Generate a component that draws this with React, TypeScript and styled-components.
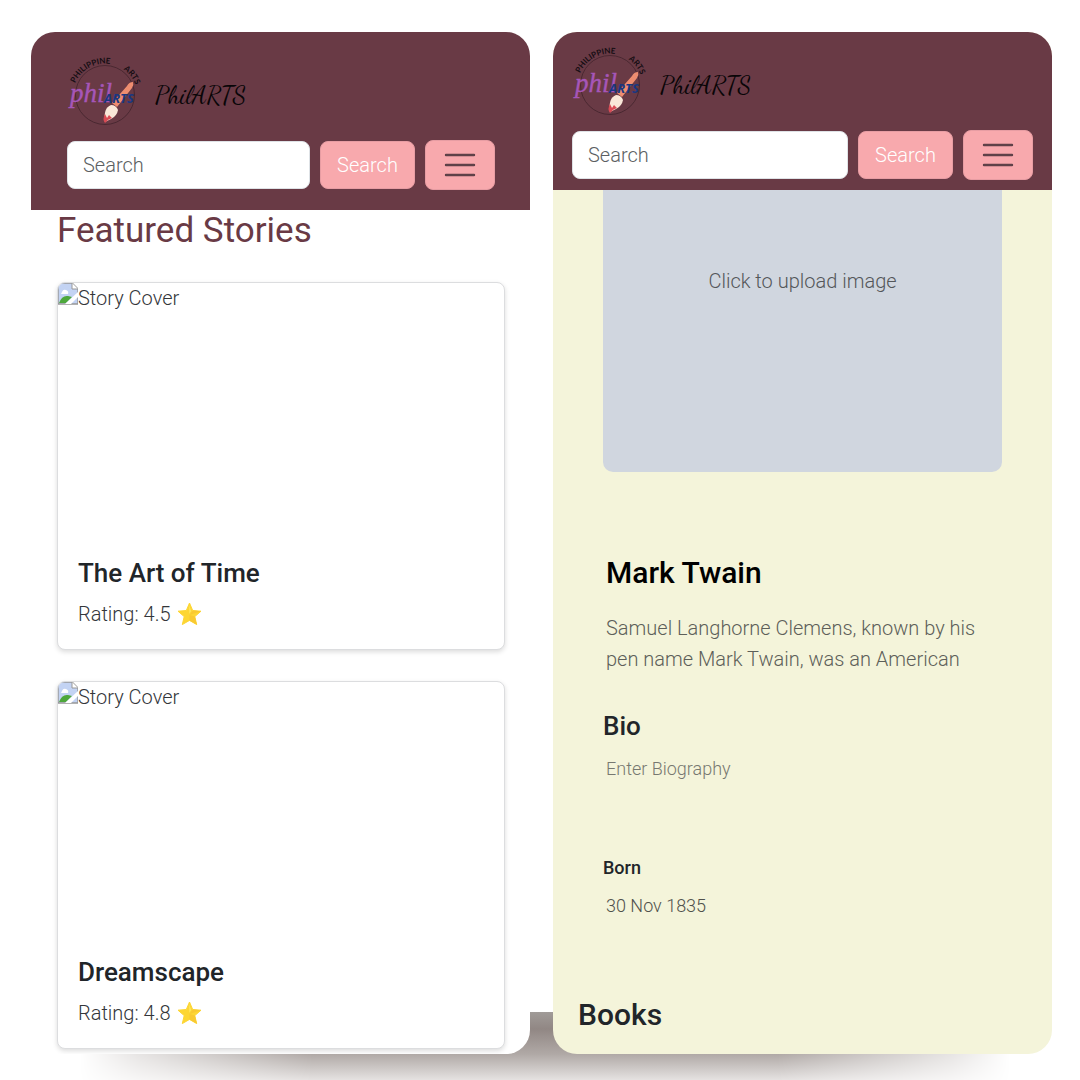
import React, { useId } from "react";
import styled, { createGlobalStyle } from "styled-components";

const GlobalStyle = createGlobalStyle`
  *, *::before, *::after { box-sizing: border-box; }
  body {
    margin: 0;
    background: #fff;
    color: #212529;
    font-family: Roboto, "Liberation Sans", sans-serif;
    font-weight: 300;
    font-size: 20px;
    line-height: 30px;
  }
  h1, h2, h3, p { margin: 0; }
  button, input, textarea { font: inherit; color: inherit; }
`;

const Stage = styled.main`
  position: relative;
  display: grid;
  grid-template-columns: 1fr 1fr;
  gap: 23px;
  min-height: 100vh;
  padding: 32px 28px 26px 31px;
  overflow: hidden;
`;

const GroundShadow = styled.div`
  position: absolute;
  left: 60px;
  right: 50px;
  bottom: 0;
  height: 68px;
  background: linear-gradient(#a09b98 0%, #918784 25%, #b0a9a6 62%, #e5e2e1 100%);
  mask-image: linear-gradient(90deg, transparent 2%, rgba(0, 0, 0, 0.3) 8%, #000 26%, #000 74%, rgba(0, 0, 0, 0.3) 92%, transparent 98%);
`;

const Screen = styled.section<{ $tone: string }>`
  position: relative;
  display: flex;
  flex-direction: column;
  min-width: 0;
  overflow: hidden;
  border-radius: 24px;
  background: ${(p) => p.$tone};
`;

const Header = styled.header<{ $inset: string }>`
  padding: ${(p) => p.$inset};
  background: #693a45;
`;

const Brand = styled.a`
  display: flex;
  align-items: flex-start;
  gap: 12px;
  height: 88px;
  color: #080507;
  text-decoration: none;
`;

const BrandName = styled.span`
  padding-top: 28px;
  font-family: "Dancing Script", cursive;
  font-weight: 400;
  font-size: 25px;
`;

const SearchRow = styled.form`
  display: flex;
  align-items: center;
  gap: 10px;
`;

const SearchInput = styled.input`
  flex: 1;
  min-width: 0;
  height: 48px;
  padding: 0 15px;
  border: 1px solid #dee2e6;
  border-radius: 8px;
  background: #fff;
  &::placeholder { color: #5c5f62; opacity: 1; }
`;

const SearchButton = styled.button`
  width: 95px;
  height: 48px;
  padding: 0;
  border: 1px solid #e79da3;
  border-radius: 8px;
  background: #f8a9ad;
  color: #fff;
`;

const MenuButton = styled.button`
  display: grid;
  place-items: center;
  width: 70px;
  height: 50px;
  padding: 0;
  border: 1px solid #e79da3;
  border-radius: 8px;
  background: #f8a9ad;
  color: #5f4148;
`;

const Stories = styled.div`
  display: flex;
  flex-direction: column;
  gap: 31px;
  padding: 0 25px 4px 26px;
`;

const StoriesTitle = styled.h1`
  color: #693a45;
  font-weight: 400;
  font-size: 35px;
  line-height: 41px;
`;

const Card = styled.article`
  border: 1px solid #dcdddf;
  border-radius: 8px;
  background: #fff;
  box-shadow: 0 2px 5px rgba(0, 0, 0, 0.14);
  overflow: hidden;
`;

const Cover = styled.div`
  display: flex;
  height: 268px;
  color: #33363a;
`;

const CardBody = styled.div`
  padding: 4px 20px 20px;
`;

const CardTitle = styled.h2`
  font-weight: 500;
  font-size: 26px;
  line-height: 36px;
`;

const Rating = styled.p`
  display: flex;
  align-items: center;
  gap: 6px;
  padding-top: 8px;
  color: #33363a;
`;

const Profile = styled.form`
  display: flex;
  flex-direction: column;
  padding: 0 50px;
`;

const Upload = styled.button`
  height: 282px;
  padding: 0 0 100px;
  border: 0;
  border-radius: 0 0 10px 10px;
  background: #d0d6df;
  color: #54575a;
`;

const Field = styled.input<{ $kind?: "name" | "small" }>`
  width: 100%;
  height: 40px;
  padding: 0 3px;
  border: 0;
  background: transparent;
  color: ${(p) => (p.$kind === "name" ? "#000" : "#50514c")};
  font-size: ${(p) => (p.$kind === "name" ? "30px" : "18px")};
  font-weight: ${(p) => (p.$kind === "name" ? 500 : 300)};
`;

const TextArea = styled.textarea<{ $small?: boolean }>`
  display: block;
  width: 100%;
  height: ${(p) => (p.$small ? "82px" : "62px")};
  padding: 0 3px;
  border: 0;
  resize: none;
  overflow: hidden;
  background: transparent;
  color: #5d5f59;
  font-size: ${(p) => (p.$small ? "18px" : "20px")};
  line-height: 31px;
  &::placeholder { color: #777870; opacity: 1; }
`;

const NameGroup = styled.div`
  padding: 80px 0 35px;
  display: grid;
  gap: 21px;
`;

const Label = styled.label<{ $large?: boolean }>`
  font-weight: 500;
  font-size: ${(p) => (p.$large ? "26px" : "18px")};
  line-height: ${(p) => (p.$large ? "32px" : "24px")};
`;

const FieldGroup = styled.div<{ $gap: string }>`
  display: grid;
  gap: ${(p) => p.$gap};
  padding-bottom: 21px;
`;

const BooksTitle = styled.h2`
  padding: 51px 25px 20px;
  font-weight: 500;
  font-size: 30px;
  line-height: 36px;
`;

function Logo() {
  const arc = useId();
  return (
    <svg width="76" height="82" viewBox="0 0 76 82" aria-hidden="true">
      <circle cx="38" cy="43" r="29.5" fill="none" stroke="#46262f" strokeWidth="0.9" />
      <path id={arc} d="M5.5 44A32.5 32.5 0 0 1 70.5 44" fill="none" />
      <text fill="#150d13" fontFamily="Lato, sans-serif" fontWeight="700" fontSize="8" textAnchor="middle">
        <textPath href={`#${arc}`} startOffset="34%">PHILIPPINE</textPath>
      </text>
      <text fill="#150d13" fontFamily="Lato, sans-serif" fontWeight="700" fontSize="8" textAnchor="middle">
        <textPath href={`#${arc}`} startOffset="79%">ARTS</textPath>
      </text>
      <path d="M66 30Q62 30 60 34L45 51L50 55L65 36Q67 33 66 30Z" fill="#ee8d70" />
      <path d="M44 53Q49 53 51 58Q50 64 44 67L38 70Q36 56 44 53Z" fill="#fae8d9" />
      <path d="M38 62L40 66L42 63L45 66Q41 67 38 71Q35 67 38 62Z" fill="#d94b55" />
      <text x="3" y="50" fill="#a656b8" stroke="#a656b8" strokeWidth="0.4" fontFamily="Liberation Serif, serif" fontStyle="italic" fontSize="27">phil</text>
      <text x="37" y="51" fill="#193781" fontFamily="Open Sans, sans-serif" fontStyle="italic" fontWeight="700" fontSize="13">ARTS</text>
    </svg>
  );
}

function TopBar({ inset, id }: { inset: string; id: string }) {
  return (
    <Header $inset={inset}>
      <Brand href="#home">
        <Logo />
        <BrandName>PhilARTS</BrandName>
      </Brand>
      <SearchRow onSubmit={(e) => e.preventDefault()}>
        <SearchInput id={id} type="search" aria-label="Search" placeholder="Search" />
        <SearchButton type="submit">Search</SearchButton>
        <MenuButton type="button" aria-label="Menu">
          <svg width="32" height="24" viewBox="0 0 32 24" fill="none" stroke="currentColor" strokeWidth="2.4" strokeLinecap="round">
            <path d="M2 2H30M2 12H30M2 22H30" />
          </svg>
        </MenuButton>
      </SearchRow>
    </Header>
  );
}

function MissingPicture() {
  return (
    <svg width="20" height="22" viewBox="0 0 20 22" aria-hidden="true">
      <path d="M0 0H14L20 6V21H0Z" fill="#c3d3f3" stroke="#989898" strokeWidth="1.4" />
      <path d="M4 9Q5 6 8 7Q11 8 10 11H3Z" fill="#fff" />
      <path d="M1 20Q4 12 10 13L14 14L8 20Z" fill="#4da83b" />
      <path d="M20 9L7 21H13L20 14Z" fill="#fff" />
      <path d="M14 0V6H20" fill="#fff" stroke="#989898" />
    </svg>
  );
}

function Star() {
  return (
    <svg width="25" height="24" viewBox="0 0 25 24" role="img" aria-label="stars">
      <path d="M12.5 1L15.7 8.5L24 9.2L17.8 14.6L19.7 22.6L12.5 18.4L5.3 22.6L7.2 14.6L1 9.2L9.3 8.5Z" fill="#fdd634" stroke="#fdd634" strokeLinejoin="round" />
      <path d="M12.5 13L17.8 14.6L19.7 22.6L12.5 18.4ZM12.5 13L15.7 8.5L24 9.2Z" fill="#f9c932" />
      <path d="M12.5 3L13.7 9L12.5 12Z" fill="#fff07a" />
    </svg>
  );
}

const stories = [
  { title: "The Art of Time", rating: "4.5" },
  { title: "Dreamscape", rating: "4.8" },
];

export default function App() {
  return (
    <>
      <GlobalStyle />
      <Stage>
        <GroundShadow />
        <Screen $tone="#fff">
          <TopBar inset="20px 35px 20px 36px" id="search-stories" />
          <Stories>
            <StoriesTitle>Featured Stories</StoriesTitle>
            {stories.map((s) => (
              <Card key={s.title}>
                <Cover>
                  <MissingPicture />
                  <span>Story Cover</span>
                </Cover>
                <CardBody>
                  <CardTitle>{s.title}</CardTitle>
                  <Rating>
                    Rating: {s.rating} <Star />
                  </Rating>
                </CardBody>
              </Card>
            ))}
          </Stories>
        </Screen>
        <Screen $tone="#f4f4da">
          <TopBar inset="10px 19px" id="search-author" />
          <Profile onSubmit={(e) => e.preventDefault()}>
            <Upload type="button">Click to upload image</Upload>
            <NameGroup>
              <Field $kind="name" aria-label="Name" defaultValue="Mark Twain" />
              <TextArea
                aria-label="Description"
                defaultValue="Samuel Langhorne Clemens, known by his pen name Mark Twain, was an American"
              />
            </NameGroup>
            <FieldGroup $gap="11px">
              <Label htmlFor="bio" $large>Bio</Label>
              <TextArea id="bio" $small placeholder="Enter Biography" />
            </FieldGroup>
            <FieldGroup $gap="5px">
              <Label htmlFor="born">Born</Label>
              <Field id="born" $kind="small" defaultValue="30 Nov 1835" />
            </FieldGroup>
          </Profile>
          <BooksTitle>Books</BooksTitle>
        </Screen>
      </Stage>
    </>
  );
}
